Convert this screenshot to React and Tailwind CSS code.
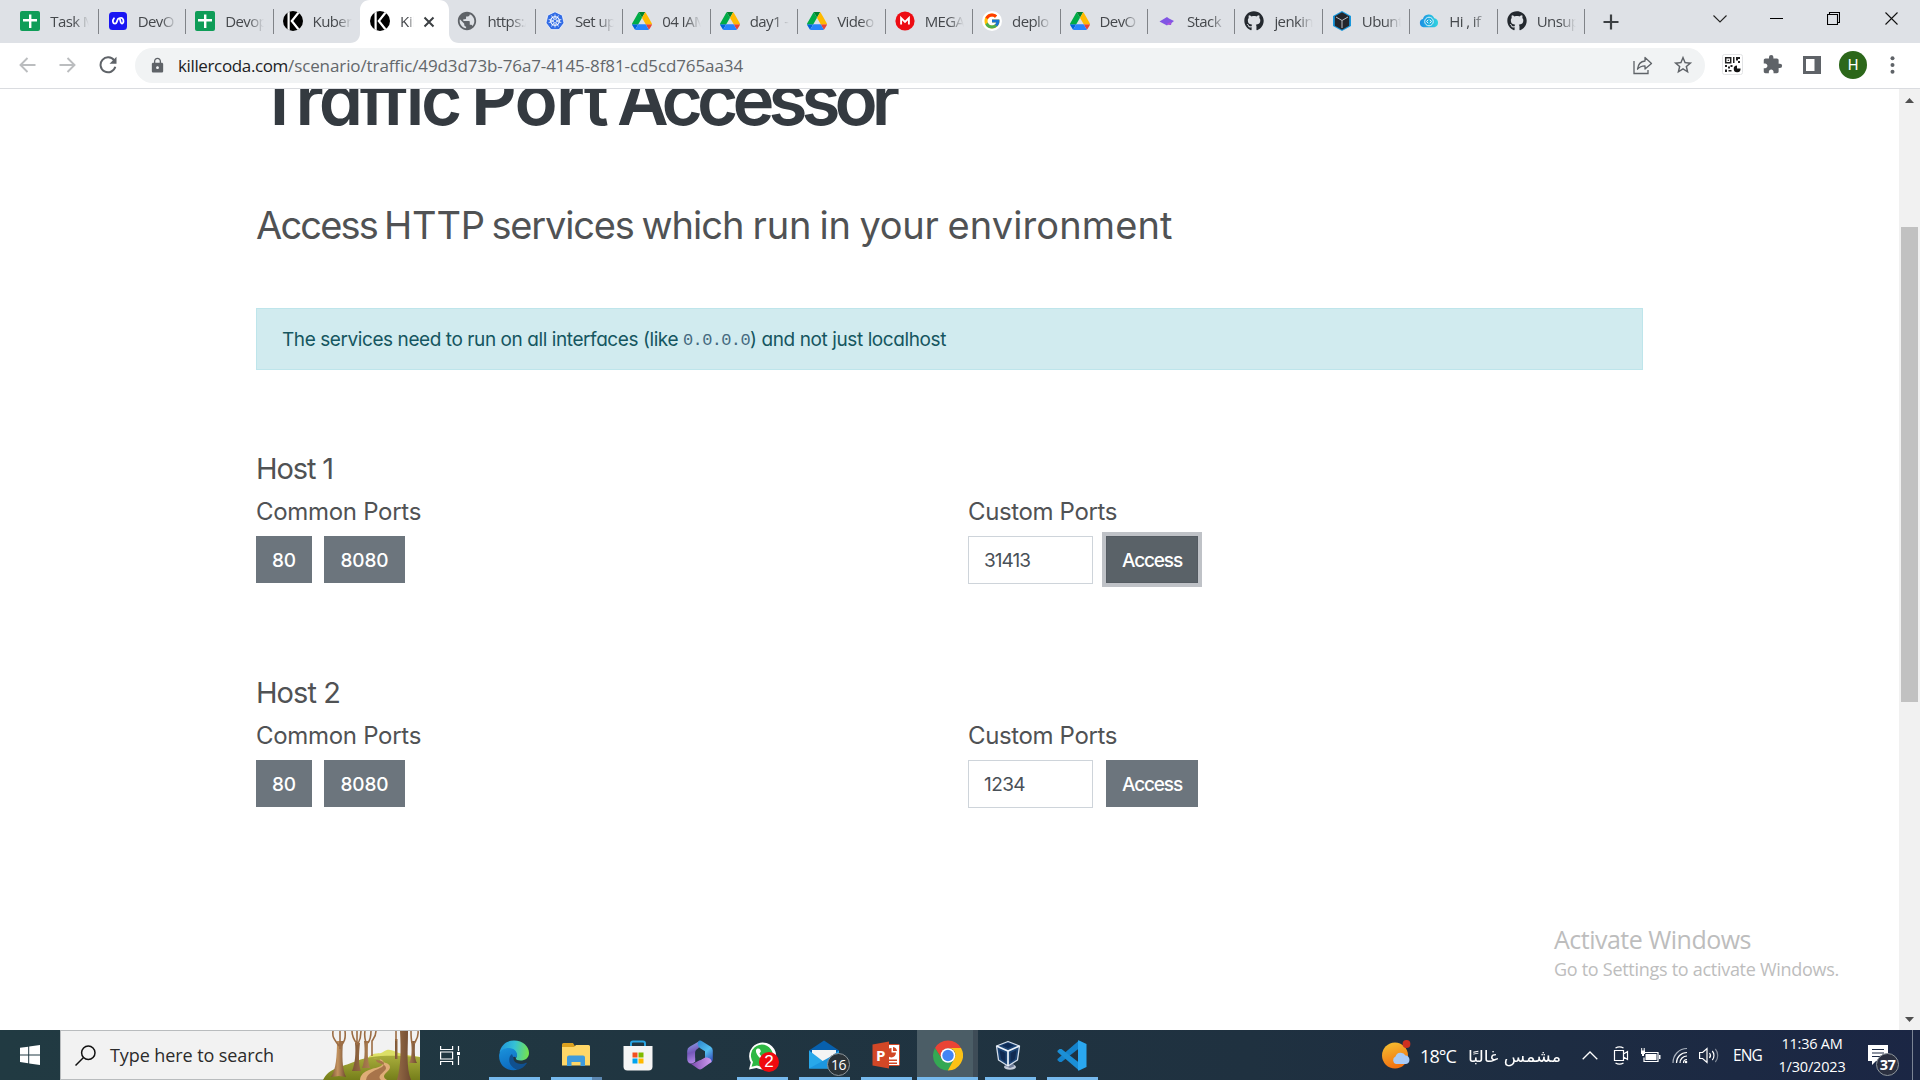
import React, { useLayoutEffect, useRef, useState } from "react";
import { FaGithub } from "react-icons/fa";
import { FcGoogle } from "react-icons/fc";
import { MdLock, MdPublic, MdExtension, MdStarBorder } from "react-icons/md";

/* Text whose tracking is adjusted so that it fills a given width. */
function Fit({ w, className = "", scale = false, children }) {
  const ref = useRef(null);
  const [style, setStyle] = useState({});
  useLayoutEffect(() => {
    const el = ref.current;
    const natural = el.getBoundingClientRect().width;
    if (scale) setStyle({ transform: `scaleX(${w / natural})`, transformOrigin: "left" });
    else setStyle({ letterSpacing: `${(w - natural) / el.textContent.length}px` });
  }, []);
  return (
    <span ref={ref} style={style} className={`inline-block whitespace-pre ${className}`}>
      {children}
    </span>
  );
}

/* A line of words, each with its own text width and advance. */
function Words({ items }) {
  return items.map(([word, width, advance]) => (
    <span key={word} className="inline-block whitespace-pre" style={{ width: advance }}>
      <Fit w={width}>{word}</Fit>
    </span>
  ));
}

const Sheets = () => (
  <svg width="20" height="20" viewBox="0 0 20 20">
    <rect width="20" height="20" rx="2" fill="#0f9d58" />
    <path d="M9 3.500h2.400V8H17v2.400h-5.600V17H9v-6.600H3V8h6z" fill="#fff" />
  </svg>
);
const Sprints = () => (
  <svg width="20" height="20" viewBox="0 0 20 20">
    <rect x="1" y="1" width="18" height="18" rx="3.500" fill="#1a16f3" />
    <path d="M6 7.300C4 9.500 4.800 12.700 7 12.700c2.800 0 1.600-5.400 4-5.400 1.800 0 1 5.200 2.800 5.200 2 0 2.200-3.600.6-5.200-.9-.8-2-.6-3.200 0" fill="none" stroke="#fff" strokeWidth="1.800" strokeLinecap="round" />
  </svg>
);
const Killer = () => (
  <svg width="20" height="20" viewBox="0 0 20 20">
    <defs><clipPath id="kc"><circle cx="10" cy="10" r="10" /></clipPath></defs>
    <g clipPath="url(#kc)">
      <path d="M0 0h20v20H0z" fill="#000" />
      <path d="M4.500 0h2.200v20H4.500z" fill="#fff" />
      <path d="M16 1 8.800 10l7.200 9" fill="none" stroke="#fff" strokeWidth="2.200" />
    </g>
  </svg>
);
const Globe = () => <MdPublic size={22} color="#5f6368" className="shrink-0" />;
const Kube = () => (
  <svg width="20" height="20" viewBox="0 0 20 20">
    <path d="M10 .8l7.200 3.400L19 12l-5 6.600H6L1 12l1.800-7.800z" fill="#326ce5" stroke="#fff" strokeWidth=".7" />
    <circle cx="10" cy="10" r="4.300" fill="none" stroke="#fff" strokeWidth="1.100" />
    <path d="M10 3.500v13M3.700 8.500l12.600 3M3.700 11.500l12.600-3M6.500 4.500l7 11M13.500 4.500l-7 11" stroke="#fff" strokeWidth=".8" />
    <circle cx="10" cy="10" r="1.200" fill="#326ce5" />
  </svg>
);
const Drive = () => (
  <svg width="20" height="20" viewBox="0 0 87.3 87.3">
    <g transform="translate(0 4.500)">
      <path d="M6.600 66.850l3.850 6.650c.8 1.400 1.950 2.500 3.300 3.300L27.500 53H0c0 1.550.4 3.100 1.200 4.500z" fill="#0066da" />
      <path d="M43.650 25 29.900 1.200c-1.350.8-2.500 1.900-3.300 3.300L1.200 48.500A9 9 0 0 0 0 53h27.500z" fill="#00ac47" />
      <path d="M73.550 76.800c1.350-.8 2.500-1.900 3.300-3.300l1.600-2.750L86.100 57.500c.8-1.400 1.200-2.950 1.200-4.500H59.800l5.850 11.500z" fill="#ea4335" />
      <path d="M43.650 25 57.400 1.200C56.050.4 54.500 0 52.900 0H34.400c-1.600 0-3.150.45-4.500 1.200z" fill="#00832d" />
      <path d="M59.800 53H27.500L13.750 76.800c1.350.8 2.900 1.200 4.500 1.200h50.800c1.600 0 3.150-.45 4.500-1.200z" fill="#2684fc" />
      <path d="M73.400 26.500 60.700 4.500c-.8-1.400-1.950-2.500-3.300-3.300L43.650 25 59.800 53h27.450c0-1.550-.4-3.100-1.200-4.500z" fill="#ffba00" />
    </g>
  </svg>
);
const Mega = () => (
  <svg width="20" height="20" viewBox="0 0 20 20">
    <circle cx="10" cy="10" r="9.600" fill="#ed0c13" />
    <path d="M6.100 13.500V7l3.900 3.900L13.900 7v6.500" fill="none" stroke="#fff" strokeWidth="1.900" />
  </svg>
);
const Google = () => (
  <span className="flex size-5 items-center justify-center rounded-full bg-white"><FcGoogle size={18} /></span>
);
const Stack = () => (
  <svg width="20" height="20" viewBox="0 0 20 20">
    <path d="M2.500 10.500 10 6l2 1.500 5 2.500-2.500 2-.5 2-3-.5-1 1z" fill="#8155e4" />
    <path d="M9 13 14 11l-.5 3z" fill="#b04fd8" />
  </svg>
);
const Github = () => <FaGithub size={20} color="#24292f" />;
const Cube = () => (
  <svg width="20" height="20" viewBox="0 0 20 20">
    <path d="M10 0l9 5v10l-9 5-9-5V5z" fill="#1897dc" />
    <path d="M10 1.300l7.200 4v9.500L10 18.700 2.800 14.800V5.300z" fill="#23262c" />
    <path d="M4 6l6 3.500L16 6M10 9.500V17" fill="none" stroke="#b9bec4" strokeWidth="1" />
  </svg>
);
const Cloud = () => (
  <svg width="20" height="20" viewBox="0 0 20 20">
    <defs><linearGradient id="cl"><stop stopColor="#1a8fe3" /><stop offset="1" stopColor="#2fd3e0" /></linearGradient></defs>
    <path d="M4.500 16.200a4.200 4.200 0 0 1-.6-8.200A6 6 0 0 1 15.300 7.200 4.600 4.600 0 0 1 15.500 16.200z" fill="url(#cl)" />
    <circle cx="10" cy="10.500" r="4.300" fill="none" stroke="#d9f1fa" strokeWidth="1" />
    <path d="M9.200 8.800 7.600 10.500l1.600 1.700M10.800 8.800l1.600 1.700-1.600 1.700" fill="none" stroke="#fff" strokeWidth=".9" />
  </svg>
);

const tabs = [
  [Sheets, "Task M"], [Sprints, "DevO"], [Sheets, "Devop"], [Killer, "Kuber"], [Killer, "Kil"],
  [Globe, "https:/"], [Kube, "Set up"], [Drive, "04 IAM"], [Drive, "day1 -"], [Drive, "Video"],
  [Mega, "MEGA"], [Google, "deplo"], [Drive, "DevO"], [Stack, "Stack"], [Github, "jenkin"],
  [Cube, "Ubunt"], [Cloud, "Hi , if"], [Github, "Unsup"],
];

function TabStrip() {
  return (
    <div className="flex h-[43px] bg-[#dee1e6] pl-[11.300px]">
      {tabs.map(([Icon, label], i) => {
        const active = i === 4;
        return (
          <div key={i} className={`relative flex w-[87.450px] shrink-0 items-center pl-[9px] ${active ? "z-10" : ""}`}>
            {active && (
              <svg className="absolute -left-[11px] top-0" width="110" height="43" viewBox="0 0 110 43">
                <path d="M0 43c6 0 10-4 10-10V10C10 4 14 0 20 0h69c6 0 10 4 10 10v23c0 6 4 10 10 10z" fill="#fff" />
              </svg>
            )}
            <span className="relative -mt-px flex size-5 shrink-0 items-center justify-center"><Icon /></span>
            <span className={`relative -mt-[2px] ml-[10px] overflow-hidden whitespace-nowrap font-['Open_Sans'] text-[15px] leading-[22px] text-[#45484c] ${active ? "w-[14px] tracking-[-0.3px] [mask-image:linear-gradient(to_right,#000_60%,transparent)]" : "w-[39px] tracking-[-0.600px] [mask-image:linear-gradient(to_right,#000_60%,transparent)]"}`}>
              {label}
            </span>
            {active && (
              <svg className="relative ml-[9px]" width="12" height="12" viewBox="0 0 12 12">
                <path d="M1.500 1.500l9 9M10.500 1.500l-9 9" stroke="#3c4043" strokeWidth="2" />
              </svg>
            )}
            {!active && i !== 3 && <span className="absolute right-0 top-[9px] h-[25px] w-px bg-[#808388]" />}
          </div>
        );
      })}
      <div className="flex flex-1 items-center">
        <svg className="ml-[18px]" width="16" height="16" viewBox="0 0 16 16"><path d="M8 .5v15M.5 8h15" stroke="#3c4043" strokeWidth="2.200" /></svg>
      </div>
      <div className="flex h-[37px] items-center">
        <span className="flex w-[57px] justify-center"><svg width="14" height="8" viewBox="0 0 14 8"><path d="M.5.500 7 7 13.500.5" fill="none" stroke="#222" strokeWidth="1.100" /></svg></span>
        <span className="flex w-[57px] justify-center"><span className="h-px w-[13px] bg-black" /></span>
        <span className="flex w-[57px] justify-center"><svg width="13" height="13" viewBox="0 0 13 13"><path d="M.5 2.500h10v10H.5zM2.500 2.500v-2h10v10h-2" fill="none" stroke="#000" strokeWidth="1.100" /></svg></span>
        <span className="flex w-[58px] justify-center"><svg width="13" height="13" viewBox="0 0 13 13"><path d="M.5.500l12 12M12.500.500l-12 12" stroke="#111" strokeWidth="1.100" /></svg></span>
      </div>
    </div>
  );
}

function Toolbar() {
  return (
    <div className="flex h-[46px] items-center border-b border-[#dadce0] bg-white pb-[2px] pl-[19px]">
      <svg width="17" height="16" viewBox="0 0 17 16"><path d="M16.500 8H1.500M8.500 1 1.500 8l7 7" fill="none" stroke="#bbbdbf" strokeWidth="1.900" /></svg>
      <svg className="ml-[23px]" width="17" height="16" viewBox="0 0 17 16"><path d="M.5 8h15M8.500 1l7 7-7 7" fill="none" stroke="#bbbdbf" strokeWidth="1.900" /></svg>
      <svg className="ml-[23px]" width="18" height="18" viewBox="0 0 18 18">
        <path d="M15.200 4.500A7.500 7.500 0 1 0 16.300 10.800" fill="none" stroke="#5f6368" strokeWidth="2" />
        <path d="M17.500.8v7h-7z" fill="#5f6368" />
      </svg>
      <div className="ml-[18px] mt-px flex h-[35px] w-[1570px] items-center rounded-full bg-[#f1f3f4] pl-[14px] pr-[11px]">
        <MdLock size={17} color="#5f6368" />
        <div className="ml-[12px] mt-px flex font-['Open_Sans'] text-[17px] leading-6">
          <Fit w={110} className="text-[#202124]">killercoda.com</Fit>
          <Fit w={455} className="text-[#63676b]">/scenario/traffic/49d3d73b-76a7-4145-8f81-cd5cd765aa34</Fit>
        </div>
        <svg className="ml-auto" width="20" height="19" viewBox="0 0 20 19">
          <path d="M1 5v12.500h14V14" fill="none" stroke="#5f6368" strokeWidth="1.300" />
          <path d="M12 1.500 18.500 7.500 12 13V9.800c-3.500 0-5.500.9-7.500 3.400C5 9 7.500 5.500 12 5z" fill="none" stroke="#5f6368" strokeWidth="1.300" strokeLinejoin="round" />
        </svg>
        <MdStarBorder size={22} color="#5f6368" className="ml-[19px]" />
      </div>
      <svg className="ml-[17px]" width="21" height="21" viewBox="0 0 21 21">
        <rect x=".5" y=".5" width="20" height="20" rx="2" fill="#fff" stroke="#e2e3e5" />
        <path d="M3.700 3.700h5v5h-5z" fill="none" stroke="#222" strokeWidth="1.500" />
        <path d="M5.700 5.700h1.200v1.200H5.700zM11 3h1.500v6H11zM14 3h4v2h-2v1.500h-2zM16 7h2v2h-2zM3 11h2v2H3zM6 12.500h2v2H6zM3 15.500h2v2.500H3zM6.500 16h3v1.500h-3zM8.500 11h2v2h-2z" fill="#222" />
        <path d="M15 11.500v3h3.500a3.400 3.400 0 1 1-3.500-3z" fill="#111" />
      </svg>
      <MdExtension size={21} color="#5f6368" className="ml-[19px]" />
      <svg className="ml-[20px]" width="18" height="18" viewBox="0 0 18 18"><path d="M0 0h18v18H0zM3 3v12h8.500V3z" fillRule="evenodd" fill="#5f6368" /></svg>
      <span className="ml-[18px] flex size-7 items-center justify-center rounded-full bg-[#2c671a] pt-px font-['Roboto'] text-[15px] text-white">H</span>
      <svg className="ml-[23px]" width="5" height="18" viewBox="0 0 5 18"><g fill="#5f6368"><circle cx="2.500" cy="2.300" r="2" /><circle cx="2.500" cy="9" r="2" /><circle cx="2.500" cy="15.700" r="2" /></g></svg>
    </div>
  );
}

function Host({ name, nameWidth, port, portWidth, focused, className }) {
  const btn = "flex h-[47px] items-center justify-center bg-[#6c757d] pt-[3px] text-[19px] font-medium text-white";
  return (
    <section className={className}>
      <h3 className="text-[29px] leading-9"><Fit w={nameWidth}>{name}</Fit></h3>
      <div className="mt-[10px] flex">
        <div className="w-[712px]">
          <h4 className="text-[24px] leading-[30px]"><Fit w={165}>Common Ports</Fit></h4>
          <div className="mt-[9px] flex gap-3">
            <button className={`${btn} w-[56px]`}><Fit w={24}>80</Fit></button>
            <button className={`${btn} w-[81px]`}><Fit w={48}>8080</Fit></button>
          </div>
        </div>
        <div>
          <h4 className="text-[24px] leading-[30px]"><Fit w={149}>Custom Ports</Fit></h4>
          <div className="mt-[9px] flex gap-[13px]">
            <div className="flex h-12 w-[125px] items-center border border-[#ced4da] pl-[15px] pt-[2px] text-[19px] text-[#495057]"><Fit w={portWidth}>{port}</Fit></div>
            <button className={focused
              ? "flex h-[47px] w-[92px] items-center justify-center border border-[#545b62] bg-[#5a6268] pt-[3px] text-[19px] font-medium text-white shadow-[0_0_0_4px_#bfc2c7]"
              : `${btn} w-[92px]`}><Fit w={60}>Access</Fit></button>
          </div>
        </div>
      </div>
    </section>
  );
}

const titleWords = [["Traffic", 203, 215], ["Port", 136, 146], ["Accessor", 277, 280]];
const subtitleWords = [
  ["Access", 121, 128], ["HTTP", 101, 107.500], ["services", 142, 150], ["which", 102, 111], ["run", 59, 67],
  ["in", 31, 40], ["your", 79, 88], ["environment", 225, 240],
];

function Page() {
  return (
    <div className="relative flex h-[941px] overflow-hidden bg-white">
      <main className="w-[1899px] pl-[256px] font-['Inter'] text-[#505254] [font-feature-settings:'cv11']">
        <h1 className="-mt-[26px] h-[72px] text-[71px] font-semibold leading-[73px] text-[#343a40]"><Words items={titleWords} /></h1>
        <h2 className="mt-[66px] h-[48px] text-[38px] leading-[48px]"><Words items={subtitleWords} /></h2>
        <div className="mt-[59px] flex h-[62px] w-[1387px] items-center border border-[#bee5eb] bg-[#d1ebef] pl-[25px] pt-[2px] text-[19px] text-[#155660]">
          <Fit w={401}>The services need to run on all interfaces (like </Fit>
          <Fit w={67} className="pt-[2px] font-['Liberation_Mono'] text-[17px] text-[#456a80]">0.0.0.0</Fit>
          <Fit w={196}>) and not just localhost</Fit>
        </div>
        <Host className="mt-[81px]" name="Host 1" nameWidth={77} port="31413" portWidth={46} focused />
        <Host className="mt-[91px]" name="Host 2" nameWidth={84} port="1234" portWidth={41} />
      </main>
      <div className="flex w-[21px] flex-col items-center bg-[#f1f1f1]">
        <svg className="mt-[9px]" width="9" height="5" viewBox="0 0 9 5"><path d="M0 5h9L4.500 0z" fill="#505050" /></svg>
        <div className="mt-[124px] h-[475px] w-[17px] bg-[#c1c1c1]" />
        <svg className="mb-[8px] mt-auto" width="9" height="5" viewBox="0 0 9 5"><path d="M0 0h9L4.500 5z" fill="#505050" /></svg>
      </div>
      <div className="absolute left-[1554px] top-[833px] font-['Open_Sans'] text-[#bdbdbd]">
        <div className="text-[25px] leading-[34px]"><Fit w={197}>Activate Windows</Fit></div>
        <div className="mt-px text-[18px] leading-6"><Fit w={285}>Go to Settings to activate Windows.</Fit></div>
      </div>
    </div>
  );
}

const Forest = () => (
  <svg width="97" height="49" viewBox="0 0 97 49">
    <defs>
      <linearGradient id="hill" x2="0" y2="1"><stop stopColor="#a9ad3c" /><stop offset="1" stopColor="#757e1a" /></linearGradient>
      <linearGradient id="bark"><stop stopColor="#7d5535" /><stop offset=".45" stopColor="#c4935f" /><stop offset="1" stopColor="#6f4a31" /></linearGradient>
    </defs>
    <path d="M45 27c5-7 12-3 15-6 7-5 11 0 16 1 9 3 14 2 21 4v10H40z" fill="#dcdf66" />
    <path d="M0 49c6-12 18-13 28-17 20-9 42-8 69-6v23z" fill="url(#hill)" />
    <path d="M50 28c9-1 14 3 8 7-5 3-20 3-21 14h27c-8-5 3-8 3-13 0-6-14-4-9-8z" fill="#dfad77" />
    <path d="M53 29c6 0 11 3 6 7-5 3-15 5-16 13h15c-5-5 5-8 5-12 0-5-10-4-10-8z" fill="#a8744a" />
    <g fill="url(#bark)">
      <path d="M14 10c0 15-1 29-6 36l8-1 7 1c-4-8-4-22-3-36z" />
      <path d="M32 12c1 10 0 21-3 28h9c-3-7-2-18-1-28zM41 10c1 9 1 20-2 27h8c-3-8-2-18-2-27zM77 0c1 19 1 35-3 49h14c-5-13-3-29-3-49z" />
      <path d="M88 10c1 8 1 18-2 22h8c-3-5-2-15-2-22zM72 8v20h2.500V8z" />
    </g>
    <path d="M10 0c-1 7 2 9 6 15M22 0c1 8-1 11-4 15M17 0v18M29 0c0 6 2 9 5 13M38 0c0 6-1 9-3 13M34 0v14M42 0c-1 5 0 8 1 12M48 0c0 6-1 9-3 12M53 0c0 5-2 7-4 10v15M73 0v10M88 0c0 5 0 8 1 12M95 0c1 6-2 9-4 13" fill="none" stroke="#9b6c43" strokeWidth="1.600" />
  </svg>
);

const Edge = () => (
  <svg width="30" height="31" viewBox="0 0 30 30">
    <defs>
      <linearGradient id="e1" x1="0" y1=".3" x2="1" y2=".4"><stop stopColor="#2095dc" /><stop offset=".5" stopColor="#35c1d6" /><stop offset="1" stopColor="#74e34e" /></linearGradient>
      <linearGradient id="e2" x2=".3" y2="1"><stop stopColor="#1b93dc" /><stop offset="1" stopColor="#0d6cc0" /></linearGradient>
    </defs>
    <path d="M.5 12C2 5 7 0 15 0c9 0 15 6 15 12.500 0 5-4 7.500-8.500 7.500-3.500 0-5.500-1.300-4.300-2.800 2-3-1-7.700-6.200-7.700z" fill="url(#e1)" />
    <path d="M.2 14C1 9.500 5.500 7.500 10 7.500c5.500 0 8.700 4.500 8 8-.3 1-1 1.700-1 1.700C15 15 12.500 17 12 20c-.5 4 3 8.500 7 9C10 32-1 26 .2 14z" fill="url(#e2)" />
    <path d="M13 13.500C9 16 8 26 19 29.200c3.500-.8 6.800-3.200 8.700-6.200.3-.7-.2-1-.7-.7-5 2.600-13 .8-12.400-4.800z" fill="#10508f" />
  </svg>
);
const Explorer = () => (
  <svg width="28" height="26" viewBox="0 0 28 26">
    <path d="M0 2.500A1.500 1.500 0 0 1 1.500 1H11l2.500 4H0z" fill="#dca11f" />
    <path d="M0 5h12l2-2h12.500A1.500 1.500 0 0 1 28 4.500v19H0z" fill="#ffd767" />
    <path d="M5 24v-8.500a2 2 0 0 1 2-2h14a2 2 0 0 1 2 2V24h-4.500v-4h-9v4z" fill="#3f9bdc" />
  </svg>
);
const Store = () => (
  <svg width="30" height="31" viewBox="0 0 30 31">
    <path d="M8 7V3.500a2 2 0 0 1 2-2h10a2 2 0 0 1 2 2V7" fill="none" stroke="#28a4e2" strokeWidth="2" />
    <path d="M.5 6h29v20.500a4 4 0 0 1-4 4h-21a4 4 0 0 1-4-4z" fill="#f5f5f5" />
    <path d="M9.500 12.500h5v5h-5z" fill="#f25022" /><path d="M15.500 12.500h5v5h-5z" fill="#7fba00" />
    <path d="M9.500 18.500h5v5h-5z" fill="#00a4ef" /><path d="M15.500 18.500h5v5h-5z" fill="#ffb900" />
  </svg>
);
const Office = () => (
  <svg width="28" height="30" viewBox="0 0 28 30">
    <defs>
      <linearGradient id="o1" x1=".3" x2=".5" y2="1"><stop stopColor="#8da3e8" /><stop offset=".5" stopColor="#7558ba" /><stop offset="1" stopColor="#b58be8" /></linearGradient>
      <linearGradient id="o2"><stop stopColor="#7443a8" /><stop offset="1" stopColor="#cf9cf0" /></linearGradient>
      <linearGradient id="o3" x2=".6" y2="1"><stop stopColor="#2b86cd" /><stop offset=".6" stopColor="#53bff0" /><stop offset="1" stopColor="#3c5fc4" /></linearGradient>
    </defs>
    <path d="M14 .8 4 6.500A5 5 0 0 0 1.200 11v8c0 3.500 2.500 5.500 6 4l2-1.200V12c0-3 5.500-4 5.500-8z" fill="url(#o1)" />
    <path d="M13 .8c-2.500 2.500-1 6.500 2 8l4 2.500v7l2 5c3.500.5 5.800-1.500 5.800-4.300v-8.500a4.500 4.500 0 0 0-2.300-4L16 1.200a3 3 0 0 0-3-.4z" fill="url(#o3)" />
    <path d="M3 22.500c2 1.500 4.200 1.300 6.200 0l9.800-5c4-.5 7 2 6.500 4.500L16 28.800a4 4 0 0 1-4 0z" fill="url(#o2)" />
    <path d="M14 9.800l4.600 2.600v5L14 20.200l-4.600-2.600v-5z" fill="#21363f" />
  </svg>
);
const Whatsapp = () => (
  <svg width="30" height="31" viewBox="0 0 30 31">
    <path d="M2 29.500l1.800-7A13.500 13.500 0 1 1 9.500 28z" fill="#fff" />
    <path d="M4.500 26.800 6 22A11 11 0 1 1 10 25.400z" fill="#2eb843" />
    <path d="M10.500 8.500c-3 1.500-1.500 6 2.500 9.500s8 4 9 1.500c.7-2-.2-2.300-2.800-3.500-1 0-1.500 2-2.200 2-2-.8-4-3-4.500-4.500l1.400-2c-.3-1.800-1-3.500-3.400-3z" fill="#fff" />
  </svg>
);
const Mail = () => (
  <svg width="30" height="30" viewBox="0 0 30 30">
    <path d="M0 10.500 15 .5l15 10v6H0z" fill="#0760ae" />
    <path d="M3 10h24v12H3z" fill="#f4f4f4" />
    <path d="M0 10.500 15 22l15-11.500v18H0z" fill="#28a8ea" /><path d="M0 28.500 30 12v16.500z" fill="#1c96df" />
  </svg>
);
const Powerpoint = () => (
  <svg width="29" height="28" viewBox="0 0 29 28">
    <rect x="14" y="3.500" width="13.500" height="21" rx="1" fill="#fff" stroke="#d24726" />
    <path d="M19.500 7v4.500H24A4.700 4.700 0 1 1 19.500 7zM21 6a4.500 4.500 0 0 1 4 4h-4zM17 18.500h8V20h-8zM17 21.500h8V23h-8z" fill="#d24726" />
    <path d="M.5 3.500 17 .5v27L.5 24.500z" fill="#d24726" />
    <text x="4" y="19.500" fontFamily="Open Sans" fontWeight="700" fontSize="15" fill="#fff">P</text>
  </svg>
);
const Chrome = () => (
  <svg width="30" height="31" viewBox="0 0 30 30">
    <path d="M2 7.500A15 15 0 0 1 28 7.500L15 8a7 7 0 0 0-6.100 10.500z" fill="#ea4335" />
    <path d="M2 7.500A15 15 0 0 0 14.800 30l6.300-11.500a7 7 0 0 1-12.200 0z" fill="#34a853" />
    <path d="M28 7.500A15 15 0 0 1 14.800 30l6.300-11.500A7 7 0 0 0 15 7.500z" fill="#fbc116" />
    <circle cx="15" cy="15" r="7.300" fill="#fff" /><circle cx="15" cy="15" r="5.700" fill="#4285f4" />
  </svg>
);
const Vbox = () => (
  <svg className="-ml-[5px]" width="26" height="31" viewBox="0 0 26 31">
    <ellipse cx="15" cy="27" rx="6" ry="2.800" fill="#c3cbd8" />
    <path d="M10 22h8l1 4.500-4 1.500-5-2z" fill="#6e7c98" />
    <path d="M13 1.500 24.500 6l-2 14-9.500 6-9.500-6L1.500 6z" fill="#1c4474" stroke="#d5dfec" strokeWidth="1.300" strokeLinejoin="round" />
    <path d="M1.500 6 13 11l11.500-5M13 11v15" fill="none" stroke="#eef4fb" strokeWidth="1.700" />
    <path d="M7 5.500 13 3l6 2.500L13 8.300z" fill="#0d2a55" />
    <path d="M4.500 10 10.500 13v9L6 19zM21.500 10l-6 3v9l4.500-3z" fill="#102a52" />
  </svg>
);
const Vscode = () => (
  <svg width="30" height="31" viewBox="0 0 30 31">
    <path d="M22 .5 22.500 8 4.500 22 2.500 22 .5 20.300v-1.300z" fill="#1483cc" />
    <path d="M22 30.500 22.500 23 4.500 9 2.500 9 .5 10.700v1.300z" fill="#1b8fd6" />
    <path d="M22 .5 29.500 4v23L22 30.500c-.8.400-1-.1-1-1V1.500c0-.9.200-1.400 1-1z" fill="#2aa7f0" />
  </svg>
);

const apps = [
  { Icon: Edge, bar: true }, { Icon: Explorer, bar: true, multi: true }, { Icon: Store }, { Icon: Office },
  { Icon: Whatsapp, bar: true, badge: "2" }, { Icon: Mail, bar: true, badge: "16" }, { Icon: Powerpoint, bar: true },
  { Icon: Chrome, bar: true, active: true }, { Icon: Vbox, bar: true }, { Icon: Vscode, bar: true },
];

function AppButton({ Icon, bar, multi, badge, active }) {
  return (
    <div className={`relative flex h-[50px] w-[62px] items-center justify-center ${active ? "bg-gradient-to-r from-[#4b5d66] from-92% to-[#3e4c57] to-92% bg-[length:61px_50px] bg-no-repeat" : ""}`}>
      <Icon />
      {badge === "2" && <span className="absolute left-[28px] top-[22px] flex size-5 items-center justify-center rounded-full bg-[#f00a0e] font-['Liberation_Sans'] text-[17px] text-white">2</span>}
      {badge === "16" && <span className="absolute left-[34px] top-[23px] flex size-[23px] items-center justify-center rounded-full border border-[#8d959b] bg-[#2b3338] font-['Open_Sans'] text-[14px] font-medium tracking-[-0.5px] text-white">16</span>}
      {bar && <span className={`absolute bottom-0 h-[3px] bg-[#76b9ed] ${active ? "left-0 w-[61px]" : "left-[6px] w-[51px]"}`} />}
      {multi && <span className="absolute bottom-0 left-[47px] h-[3px] w-[10px] bg-[#5b86b0]" />}
    </div>
  );
}

function Taskbar() {
  return (
    <div className="flex h-[50px] items-center bg-gradient-to-r from-[#213a42] via-[#1f3140] via-65% to-[#1b2644] font-['Open_Sans'] text-white">
      <div className="flex w-[60px] justify-center">
        <svg width="20" height="20" viewBox="0 0 20 20"><path d="M0 2.800 8.200 1.700v7.700H0zM9.200 1.500 20 0v9.400H9.200zM0 10.400h8.200v7.900L0 17.100zM9.200 10.400H20V20L9.200 18.500z" fill="#fff" /></svg>
      </div>
      <div className="flex h-[50px] w-[360px] items-center border border-r-0 border-[#b9bcbe] bg-[#f2f2f2] pl-[14px]">
        <svg width="21" height="21" viewBox="0 0 21 21"><circle cx="13.300" cy="7.700" r="6.700" fill="none" stroke="#111" strokeWidth="1.500" /><path d="M8.500 12.500.500 20.500" stroke="#111" strokeWidth="1.500" /></svg>
        <Fit w={164} className="ml-[14px] text-[18px] leading-6 text-[#2b2b2b]">Type here to search</Fit>
        <span className="ml-auto"><Forest /></span>
      </div>
      <svg className="ml-[20px]" width="20" height="19" viewBox="0 0 20 19">
        <path d="M.6 0v3.500h12V0M.6 19v-3.500h12V19M.6 6h12v7H.6zM18.500 0v5M18.500 10v9" fill="none" stroke="#fff" strokeWidth="1.200" />
        <path d="M17 6h3v3h-3z" fill="#fff" />
      </svg>
      <div className="ml-[23px] flex w-[620px]">{apps.map((a, i) => <AppButton key={i} {...a} />)}</div>
      <svg className="ml-[279px] -mt-[2px]" width="29" height="29" viewBox="0 0 29 29">
        <defs><linearGradient id="sun" x2=".3" y2="1"><stop stopColor="#f5c332" /><stop offset="1" stopColor="#f27312" /></linearGradient></defs>
        <circle cx="13" cy="15.500" r="13" fill="url(#sun)" />
        <path d="M14 24a4 4 0 0 1-.5-7.500 5.500 5.500 0 0 1 10-1A4.300 4.300 0 0 1 24 24z" fill="#a9cbf7" />
        <circle cx="24.500" cy="4" r="3.900" fill="#d0301f" />
      </svg>
      <Fit w={36} className="ml-[9px] mt-[2px] text-[18px]">18°C</Fit>
      <span className="ml-[12px] mt-[2px] w-[93px]" dir="ltr"><Fit scale w={93} className="font-['DejaVu_Sans'] text-[16px]">مشمس غالبًا</Fit></span>
      <svg className="ml-[21px]" width="16" height="9" viewBox="0 0 16 9"><path d="M.7 8.300 8 1l7.300 7.300" fill="none" stroke="#fff" strokeWidth="1.300" /></svg>
      <svg className="ml-[15px]" width="16" height="19" viewBox="0 0 16 19"><path d="M1.500 4.500h9v10h-9zM10.500 8l4-2.500v8l-4-2.500M2.500 2C5 .500 8 .500 10.500 2M2.500 17c2.500 1.500 5.500 1.500 8 0" fill="none" stroke="#fff" strokeWidth="1.200" /></svg>
      <svg className="ml-[11px]" width="21" height="15" viewBox="0 0 21 15"><path d="M4 4.500h14v9H4v-4" fill="none" stroke="#fff" strokeWidth="1.200" /><path d="M5.500 6h11v6h-11zM19 7h1.500v4H19zM1 2.500h4v3.500H4v2H2V6H1zM1.200 0h1v2.500h-1zM3.700 0h1v2.500h-1z" fill="#fff" /></svg>
      <svg className="ml-[11px]" width="16" height="17" viewBox="0 0 16 17"><g fill="none" stroke="#fff" strokeWidth="1.200"><path d="M1 16C1 8 7 1.500 15 1.500" stroke="#aab2be" /><path d="M4.500 16C4.500 10 9 5.500 15 5.500M8 16c0-4 3-7 7-7M11.500 16c0-2 1.500-3.500 3.500-3.500" /></g><circle cx="14" cy="15" r="1.300" fill="#fff" /></svg>
      <svg className="ml-[11px]" width="21" height="17" viewBox="0 0 21 17"><g fill="none" stroke="#fff" strokeWidth="1.200"><path d="M.6 5.500h3L8 1.500v14l-4.400-4h-3zM10.500 6c1.200 1.500 1.200 3.500 0 5M13.300 4c2.200 2.500 2.200 6.500 0 9" /><path d="M16.300 2c3.200 3.500 3.200 9.500 0 13" stroke="#818a99" /></g></svg>
      <Fit w={29} className="ml-[13px] mt-[2px] text-[15.500px]">ENG</Fit>
      <div className="ml-[15px] flex w-[70px] flex-col items-center text-[14.500px] leading-[23px]">
        <Fit w={61}>11:36 AM</Fit>
        <Fit w={67}>1/30/2023</Fit>
      </div>
      <div className="relative ml-[21px] h-[50px] w-[45px] border-r border-[#7b8494]">
        <svg className="mt-[15px]" width="20" height="20" viewBox="0 0 20 20"><path d="M0 0h20v16H8l-4 4v-4H0z" fill="#fff" /><path d="M4 4.500h12M4 8h12M4 11.500h8" stroke="#1c2943" strokeWidth="1.200" /></svg>
        <span className="absolute left-[8px] top-[23px] flex size-[23px] items-center justify-center rounded-full border border-[#8d959b] bg-[#2b3040] text-[14.500px] font-bold tracking-[-0.5px]">37</span>
      </div>
    </div>
  );
}

export default function App() {
  return (
    <div className="h-[1080px] w-[1920px] overflow-hidden bg-white">
      <TabStrip />
      <Toolbar />
      <Page />
      <Taskbar />
    </div>
  );
}
